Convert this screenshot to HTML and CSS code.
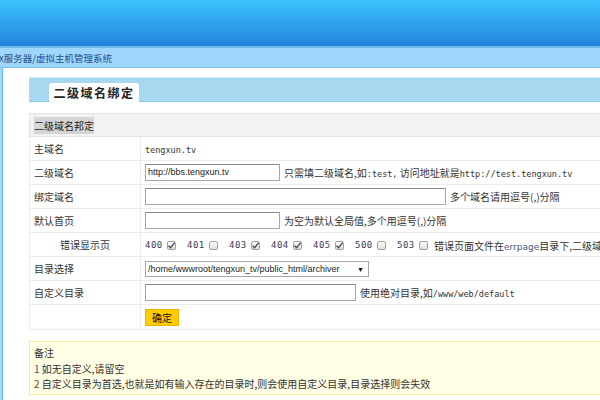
FILE: index.html
```html
<!DOCTYPE html>
<html>
<head>
<meta charset="utf-8">
<link rel="stylesheet" href="styles.css">
</head>
<body>
<div class="header"></div>
<div class="crumb"><span class="crumb-text">x服务器/虚拟主机管理系统</span></div>
<div class="page">
  <div class="main">
    <div class="tabbar"><span class="tab">二级域名绑定</span></div>
    <table class="form">
      <tr class="head"><td colspan="2"><span class="hl">二级域名邦定</span></td></tr>
      <tr><td class="lbl">主域名</td><td><span class="mono">tengxun.tv</span></td></tr>
      <tr><td class="lbl">二级域名</td><td><span class="inp w135">http://bbs.tengxun.tv</span><span class="tip">只需填二级域名,如<span class="mono">:test,</span> 访问地址就是<span class="mono">http://test.tengxun.tv</span></span></td></tr>
      <tr><td class="lbl">绑定域名</td><td><span class="inp w301"></span><span class="tip">多个域名请用逗号(,)分隔</span></td></tr>
      <tr><td class="lbl">默认首页</td><td><span class="inp w135"></span><span class="tip">为空为默认全局值,多个用逗号(,)分隔</span></td></tr>
      <tr><td class="lbl center">错误显示页</td><td><span class="codes"><span class="num">400</span><span class="cb on"><svg viewBox="0 0 9 9" width="9" height="9"><path d="M1.5 4.6 L3.6 6.8 L7.6 1.6" fill="none" stroke="#444" stroke-width="1.3"/></svg></span><span class="num">401</span><span class="cb"></span><span class="num">403</span><span class="cb on"><svg viewBox="0 0 9 9" width="9" height="9"><path d="M1.5 4.6 L3.6 6.8 L7.6 1.6" fill="none" stroke="#444" stroke-width="1.3"/></svg></span><span class="num">404</span><span class="cb on"><svg viewBox="0 0 9 9" width="9" height="9"><path d="M1.5 4.6 L3.6 6.8 L7.6 1.6" fill="none" stroke="#444" stroke-width="1.3"/></svg></span><span class="num">405</span><span class="cb on"><svg viewBox="0 0 9 9" width="9" height="9"><path d="M1.5 4.6 L3.6 6.8 L7.6 1.6" fill="none" stroke="#444" stroke-width="1.3"/></svg></span><span class="num">500</span><span class="cb"></span><span class="num">503</span><span class="cb last"></span><span class="tip2">错误页面文件在<span class="sans">errpage</span>目录下,二级域名绑定的错误页面</span></span></td></tr>
      <tr><td class="lbl">目录选择</td><td><span class="sel">/home/wwwroot/tengxun_tv/public_html/archiver<span class="arrow">▼</span></span></td></tr>
      <tr><td class="lbl">自定义目录</td><td><span class="inp w211"></span><span class="tip">使用绝对目录,如<span class="mono">/www/web/default</span></span></td></tr>
      <tr class="btnrow"><td class="lbl"></td><td><span class="btn">确定</span></td></tr>
    </table>
    <div class="note">
      <div>备注</div>
      <div><span class="n1">1</span>&nbsp;如无自定义,请留空</div>
      <div><span class="n2">2</span>&nbsp;自定义目录为首选,也就是如有输入存在的目录时,则会使用自定义目录,目录选择则会失效</div>
    </div>
  </div>
</div>
</body>
</html>
```
FILE: styles.css
```css
html, body {
  margin: 0;
  padding: 0;
  overflow: hidden;
  width: 600px;
  height: 400px;
  background: #fff;
  font-family: "Noto Sans CJK SC", "Liberation Sans", sans-serif;
  font-size: 10px;
  color: #333;
}
.header {
  height: 46px;
  background: linear-gradient(#3dc3ff, #2283dc);
  border-bottom: 2px solid #6fb8ec;
}
.crumb {
  height: 19px;
  background: #9fd6fd;
  border-bottom: 1px solid #7cc0eb;
  display: flex;
  align-items: center;
  white-space: nowrap;
  overflow: hidden;
}
.crumb-text {
  margin-left: -1px;
  color: #1e4f8c;
  font-size: 9.5px;
}
.page {
  background: #a2d8fa;
  padding-left: 2px;
  height: 340px;
}
.main {
  background: #fff;
  border-left: 1px solid #6bb8ec;
  padding: 9px 0 0 26px;
  width: 760px;
  height: 340px;
  box-sizing: border-box;
}
.tabbar {
  height: 23px;
  background: #a6d9ef;
  border-top: 1px solid #d3edf8;
  border-bottom: 1px solid #8ccbe7;
  padding-left: 20px;
  display: flex;
  align-items: flex-end;
  box-sizing: content-box;
}
.tab {
  background: #fff;
  height: 19px;
  width: 90px;
  border-radius: 3px 3px 0 0;
  margin-bottom: -1px;
  display: flex;
  align-items: center;
  justify-content: center;
  font-size: 12px;
  font-weight: bold;
  letter-spacing: 1.5px;
  color: #222;
}
.form {
  margin-top: 11px;
  border-collapse: collapse;
  width: 740px;
  border: 1px solid #e3e3e3;
}
.form td {
  border: 1px solid #ececec;
  height: 24px;
  padding: 0 4px;
  white-space: nowrap;
  box-sizing: border-box;
  vertical-align: middle;
}
.form td.lbl {
  width: 111px;
}
.form td.center {
  text-align: center;
}
.form tr.head td {
  height: 23px;
  background: #f2f2f2;
  border-color: #e3e3e3;
}
.hl {
  background: #d5d5d5;
  color: #222;
  padding: 1px 0;
}
.form tr.btnrow td {
  height: 25px;
}
.mono {
  font-family: "DejaVu Sans Mono", "Liberation Mono", monospace;
  font-size: 8.5px;
  color: #333;
}
.sans {
  font-family: "DejaVu Sans", sans-serif;
  font-size: 9px;
  color: #4a5a80;
}
.inp {
  display: inline-block;
  vertical-align: middle;
  height: 17px;
  box-sizing: border-box;
  border: 1px solid #a6a6a6;
  border-top-color: #8a8a8a;
  font-family: "Liberation Sans", sans-serif;
  font-size: 9px;
  line-height: 15px;
  padding-left: 2px;
  color: #222;
  background: #fff;
}
.w135 { width: 135px; }
.w301 { width: 301px; }
.w211 { width: 211px; }
.tip {
  margin-left: 4px;
  vertical-align: middle;
}
.codes {
  display: inline-flex;
  align-items: center;
  vertical-align: middle;
}
.num {
  font-family: "DejaVu Sans Mono", monospace;
  font-size: 9px;
  letter-spacing: 0.5px;
  color: #3c3c5c;
  width: 18px;
}
.cb {
  display: inline-flex;
  width: 9px;
  height: 9px;
  box-sizing: border-box;
  border: 1px solid #a0a0a0;
  border-radius: 2px;
  background: linear-gradient(#fdfdfd, #dedede);
  margin: 0 11px 0 4px;
  align-items: center;
  justify-content: center;
  overflow: hidden;
}
.cb svg {
  display: block;
  flex: none;
}
.cb.last {
  margin-right: 6px;
}
.tip2 {
  color: #333;
}
.sel {
  display: inline-flex;
  align-items: center;
  vertical-align: middle;
  width: 224px;
  height: 16px;
  box-sizing: border-box;
  border: 1px solid #a6a6a6;
  font-family: "Liberation Sans", sans-serif;
  font-size: 9px;
  padding-left: 2px;
  color: #222;
}
.arrow {
  margin-left: auto;
  margin-right: 4px;
  font-size: 7px;
  color: #111;
}
.btn {
  display: inline-flex;
  align-items: center;
  justify-content: center;
  vertical-align: middle;
  width: 34px;
  height: 17px;
  box-sizing: border-box;
  background: #ffcc00;
  border: 1px solid #f2b300;
  color: #111;
  font-size: 10px;
}
.note {
  margin-top: 11px;
  width: 740px;
  height: 54px;
  box-sizing: border-box;
  background: #fffde3;
  border: 1px solid #fbe7a0;
  padding: 3px 0 0 4px;
  line-height: 15.5px;
  color: #333;
}
.n1 { color: #3a4a7a; }
.n2 { color: #7a3a2a; }
```
